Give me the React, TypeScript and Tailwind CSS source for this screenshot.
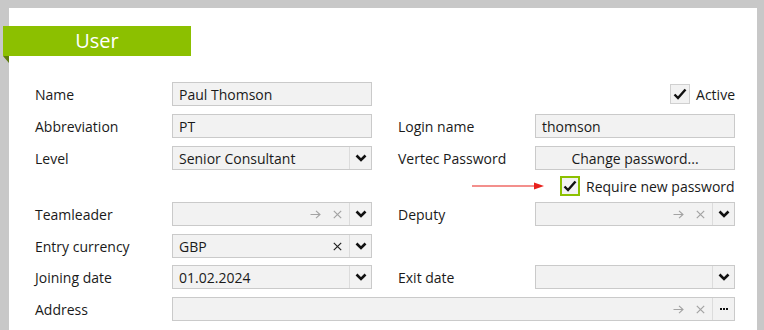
import { ReactNode } from "react";

const font = { fontFamily: '"Open Sans", "Noto Sans", sans-serif' };

function Chevron() {
  return (
    <svg width="12" height="8" viewBox="0 0 12 8" className="block">
      <polyline points="1.5,1.5 6,6 10.5,1.5" fill="none" stroke="#111" strokeWidth="2.6" />
    </svg>
  );
}

function Check() {
  return (
    <svg width="14" height="12" viewBox="0 0 14 12" className="block">
      <polyline points="1.5,6.5 5,10 12.5,1.5" fill="none" stroke="#111" strokeWidth="2.4" />
    </svg>
  );
}

function ArrowRight() {
  return (
    <svg width="11" height="9" viewBox="0 0 11 9" className="block">
      <path d="M0.5 4.5H10M6 0.8L10 4.5L6 8.2" fill="none" stroke="#a3a3a3" strokeWidth="1.1" />
    </svg>
  );
}

function Cross({ color }: { color: string }) {
  return (
    <svg width="9" height="9" viewBox="0 0 9 9" className="block">
      <path d="M0.8 0.8L8.2 8.2M8.2 0.8L0.8 8.2" fill="none" stroke={color} strokeWidth="1.2" />
    </svg>
  );
}

function Field({
  value,
  link,
  clear,
  dropdown,
  more,
  wide,
}: {
  value?: string;
  link?: boolean;
  clear?: boolean;
  dropdown?: boolean;
  more?: boolean;
  wide?: boolean;
}) {
  return (
    <div
      className={`flex h-6 items-center border border-[#cacaca] bg-[#f2f2f2] text-[#1a1a1a] ${
        wide ? "w-[563px]" : "w-[200px]"
      }`}
    >
      <span className="flex-1 truncate pl-[6px]">{value}</span>
      {link && (
        <span className="mr-[12px]">
          <ArrowRight />
        </span>
      )}
      {clear && (
        <span className="mr-[7px]">
          <Cross color={link ? "#a3a3a3" : "#222"} />
        </span>
      )}
      {dropdown && (
        <span className="flex h-full w-[22px] items-center justify-center border-l border-[#dcdcdc]">
          <Chevron />
        </span>
      )}
      {more && (
        <span className="flex h-full w-[22px] items-center justify-center gap-[1px] border-l border-[#dcdcdc]">
          <i className="block h-[2px] w-[2px] bg-[#111]" />
          <i className="block h-[2px] w-[2px] bg-[#111]" />
          <i className="block h-[2px] w-[2px] bg-[#111]" />
        </span>
      )}
    </div>
  );
}

function Row({ children, className = "" }: { children: ReactNode; className?: string }) {
  return <div className={`grid grid-cols-[137px_200px_26px_137px_200px] items-center ${className}`}>{children}</div>;
}

export default function App() {
  return (
    <div
      className="w-[764px] h-[330px] overflow-hidden bg-[#c8c8c8] pt-2 pl-[9px] pr-[7px] text-[14px] text-[#1a1a1a]"
      style={font}
    >
      <div className="h-full bg-white">
        {/* Title tab */}
        <div className="pt-[18px]">
          <div className="-ml-[6px] flex h-[30px] w-[188px] items-center justify-center bg-[#8cc000] text-[20px] text-white">
            User
          </div>
          <svg width="6" height="7" viewBox="0 0 6 7" className="-ml-[6px] block">
            <polygon points="0,0 6,0 6,7" fill="#5e7d0c" />
          </svg>
        </div>

        {/* Form */}
        <div className="mt-5 pl-[26px] flex flex-col">
          <Row className="-mt-[1px]">
            <span>Name</span>
            <Field value="Paul Thomson" />
            <span />
            <span />
            <div className="flex items-center justify-end gap-[6px]">
              <span className="flex h-5 w-5 items-center justify-center border border-[#d0d0d0] bg-[#f2f2f2]">
                <Check />
              </span>
              <span>Active</span>
            </div>
          </Row>
          <Row className="mt-2">
            <span>Abbreviation</span>
            <Field value="PT" />
            <span />
            <span>Login name</span>
            <Field value="thomson" />
          </Row>
          <Row className="mt-2">
            <span>Level</span>
            <Field value="Senior Consultant" dropdown />
            <span />
            <span>Vertec Password</span>
            <button className="h-6 w-[200px] border border-[#cacaca] bg-[#f2f2f2] text-center">
              Change password...
            </button>
          </Row>
          <div className="mt-[6px] flex h-5 items-center pl-[437px]">
            <svg width="72" height="8" viewBox="0 0 72 8" className="block">
              <line x1="0" y1="4" x2="64" y2="4" stroke="#e8201b" strokeWidth="1.2" />
              <polygon points="62,0.5 72,4 62,7.5" fill="#e8201b" />
            </svg>
            <span className="ml-[16px] flex h-5 w-5 items-center justify-center border-2 border-[#8cc000] bg-[#f2f2f2]">
              <Check />
            </span>
            <span className="ml-[6px]">Require new password</span>
          </div>
          <Row className="mt-[6px]">
            <span>Teamleader</span>
            <Field link clear dropdown />
            <span />
            <span>Deputy</span>
            <Field link clear dropdown />
          </Row>
          <Row className="mt-2">
            <span>Entry currency</span>
            <Field value="GBP" clear dropdown />
          </Row>
          <Row className="mt-[7px]">
            <span>Joining date</span>
            <Field value="01.02.2024" dropdown />
            <span />
            <span>Exit date</span>
            <Field dropdown />
          </Row>
          <div className="mt-2 grid grid-cols-[137px_563px] items-center">
            <span>Address</span>
            <Field link clear more wide />
          </div>
        </div>
      </div>
    </div>
  );
}
